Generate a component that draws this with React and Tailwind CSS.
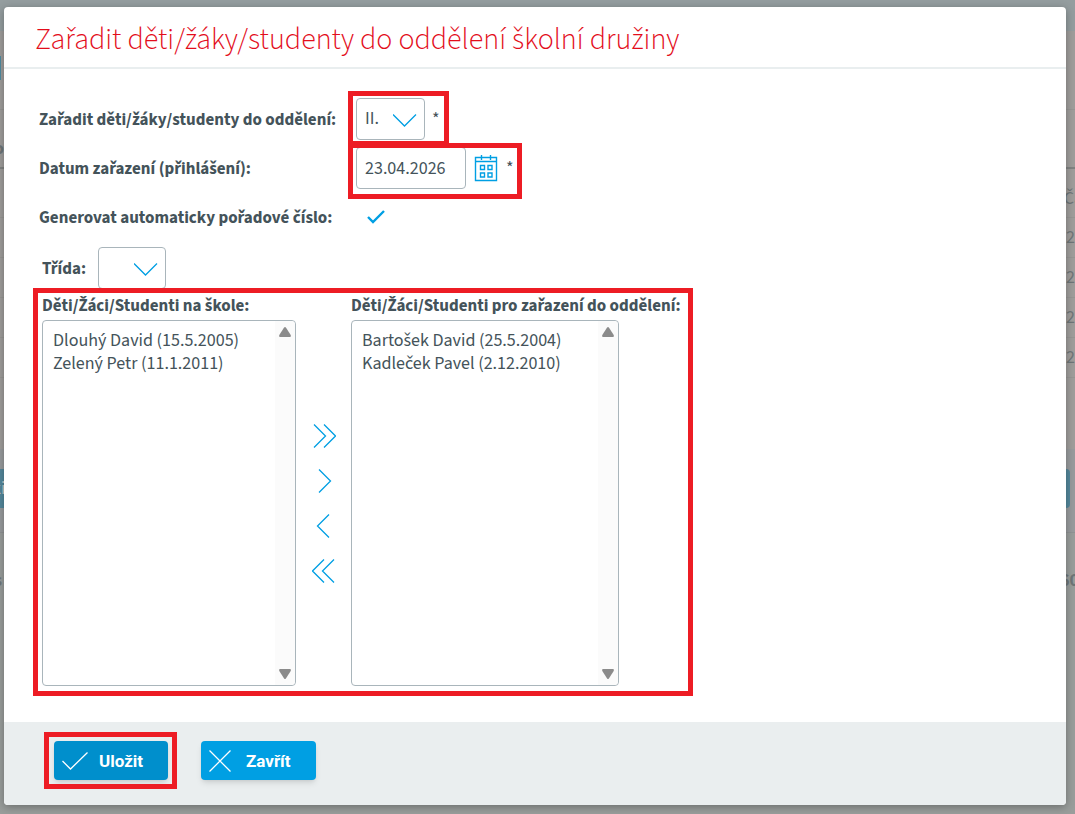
import React from 'react';

const freeChildren = ['Dlouhý David (15.5.2005)', 'Zelený Petr (11.1.2011)'];
const assignedChildren = ['Bartošek David (25.5.2004)', 'Kadleček Pavel (2.12.2010)'];

const moves = [
  { id: 'all-right', label: 'Přidat vše', path: 'M2 .5 13.5 12 2 23.5M12 .5 23.5 12 12 23.5' },
  { id: 'right', label: 'Přidat', path: 'M7 .5 18.5 12 7 23.5' },
  { id: 'left', label: 'Odebrat', path: 'M17 .5 5.5 12 17 23.5' },
  { id: 'all-left', label: 'Odebrat vše', path: 'M12 .5.5 12 12 23.5M22 .5 10.5 12 22 23.5' },
];

// Red rectangle that marks a part of the form
const Highlight = ({ className }) => (
  <span className={`pointer-events-none absolute z-10 border-5 border-[#ed1c24] ${className}`}></span>
);

const SelectBox = ({ id, width, options }) => (
  <div className="relative">
    <select
      id={id}
      className={`block h-[42px] appearance-none rounded-sm border border-[#a9b5bb] bg-white pl-2 text-lg ${width}`}
    >
      {options.map(option => (
        <option key={option}>{option}</option>
      ))}
    </select>
    <svg
      className="pointer-events-none absolute top-4 right-2 h-[13px] w-6"
      viewBox="0 0 24 13"
      fill="none"
      stroke="#009fe3"
      strokeWidth="1.3"
    >
      <path d="M0 .5 11.500 12 23 .5" />
    </svg>
  </div>
);

const ListBox = ({ id, width, options }) => (
  <div className={`relative h-[366px] ${width}`}>
    <select
      id={id}
      multiple
      className="block size-full appearance-none overflow-hidden rounded-sm border border-[#a9b5bb] bg-white px-2 py-[7px] text-lg"
    >
      {options.map(option => (
        <option key={option} className="h-[23px] px-0.5 py-0 leading-[23px]">{option}</option>
      ))}
    </select>
    <div className="pointer-events-none absolute inset-y-px right-px flex w-5 flex-col items-center justify-between rounded-r-sm bg-[#fbfbfb] py-1.5">
      <svg className="h-2.5 w-3" viewBox="0 0 12 10" fill="#8b8b8b">
        <path d="M5.1.6Q6-.4 6.9.6L11.7 8Q12.3 9.8 11 10H1Q-.3 9.8.3 8Z" />
      </svg>
      <svg className="h-2.5 w-3" viewBox="0 0 12 10" fill="#8b8b8b">
        <path d="M5.1 9.4Q6 10.4 6.9 9.4L11.7 2Q12.3.2 11 0H1Q-.3.2.3 2Z" />
      </svg>
    </div>
  </div>
);

// Dimmed page under the dialog, only its edges stay visible
const PageBehind = () => (
  <div aria-hidden="true" className="col-start-1 row-start-1 flex flex-col overflow-hidden bg-[#999d9b] text-lg text-[#6f7678]">
    <div className="h-[31px] bg-[#949d9f]"></div>
    <div className="flex h-[79px] items-center border-b border-[#979694] bg-[#9f9d9b]">
      <div className="mb-1 h-6 w-px bg-[#4f8ba0]"></div>
    </div>
    <div className="flex h-[59px] items-end border-b-2 border-[#818382] bg-[#9f9d9b] pb-1">
      <span className="-ml-1.5 font-bold">o</span>
    </div>
    <div className="flex h-[49px] items-end justify-end border-b border-[#979694] bg-[#9f9d9b] pb-1">
      <span className="-mr-2">Ča</span>
    </div>
    {[1, 2, 3, 4].map(row => (
      <div key={row} className="flex h-10 items-center justify-end border-b border-[#979694] bg-[#9f9d9b]">
        2
      </div>
    ))}
    <div className="h-[71px] bg-[#9f9d9b]"></div>
    <div className="h-[84px] border-b border-[#8f9394] bg-[#989b9d] pt-5 pr-[5px]">
      <div className="h-[39px] rounded-r-sm bg-[#54889c] pt-1.5 text-[#c4ccce]">
        <span className="-ml-2">ki</span>
      </div>
    </div>
    <div className="flex justify-between pt-[34px] font-bold">
      <span className="-ml-1.5">s</span>
      <span className="-mr-1">60</span>
    </div>
  </div>
);

const App = () => {
  return (
    <div className="grid min-h-screen grid-cols-1 font-['Source_Sans_Pro','Source_Sans_3','Noto_Sans',sans-serif] text-[17px] leading-6 text-[#44535a]">
      <PageBehind />

      <div
        role="dialog"
        aria-labelledby="dialog-title"
        className="z-10 col-start-1 row-start-1 mt-[7px] mr-[9px] mb-[9px] ml-1 flex flex-col overflow-hidden rounded-sm bg-white shadow-[0_2px_8px_rgba(0,0,0,0.3)]"
      >
        <header className="flex h-[62px] items-center border-b-2 border-[#e9eeef] pt-1.5 pl-[31px]">
          <h1 id="dialog-title" className="text-[30px] leading-8 font-light text-[#e30d1b]">
            Zařadit děti/žáky/studenty do oddělení školní družiny
          </h1>
        </header>

        <main className="flex-1 px-[35px] pt-[29px] pb-9">
          <div className="grid grid-cols-[317px_1fr] items-center gap-y-[7px]">
            <label htmlFor="department" className="pt-0.5 font-bold">Zařadit děti/žáky/studenty do oddělení:</label>
            <div className="relative flex w-fit gap-[7px]">
              <SelectBox id="department" width="w-[69px]" options={['II.']} />
              <span className="pt-2 text-lg">*</span>
              <Highlight className="-top-[7px] -bottom-1.5 -left-2 w-[101px]" />
            </div>

            <label htmlFor="date" className="pt-0.5 font-bold">Datum zařazení (přihlášení):</label>
            <div className="relative flex w-fit gap-2">
              <input
                id="date"
                type="text"
                defaultValue="23.04.2026"
                className="h-[42px] w-[110px] rounded-sm border border-[#a9b5bb] bg-white px-2 text-lg"
              />
              <button type="button" aria-label="Kalendář" className="self-center">
                <svg className="h-7 w-6" viewBox="0 0 24 28" fill="none" stroke="#009fe3">
                  <path d="M1.5 3.5H22.5V26.5H1.5ZM1.5 7.5H22.5M7.5 1V6M16.5 1V6" strokeWidth="1.4" />
                  <path d="M6.5 11.5h4v4h-4zM14 11.5h4v4h-4zM6.5 19h4v4h-4zM14 19h4v4h-4z" strokeWidth="1.4" />
                </svg>
              </button>
              <span className="pt-2 text-lg">*</span>
              <Highlight className="-top-1 -bottom-2.5 -left-2 w-[174px]" />
            </div>

            <label htmlFor="generate" className="pt-0.5 font-bold">Generovat automaticky pořadové číslo:</label>
            <div className="relative flex h-[42px] w-10 items-center justify-center">
              <input id="generate" type="checkbox" defaultChecked className="size-5 appearance-none" />
              <svg
                className="pointer-events-none absolute h-[14px] w-[18px]"
                viewBox="0 0 18 14"
                fill="none"
                stroke="#009fe3"
                strokeWidth="2.4"
              >
                <path d="M1 7 6 12 17 1" />
              </svg>
            </div>
          </div>

          <div className="mt-[9px] flex items-center gap-3 pl-[3px]">
            <label htmlFor="class" className="w-11 pt-0.5 font-bold">Třída:</label>
            <SelectBox id="class" width="w-[68px]" options={['']} />
          </div>

          <div className="relative flex w-fit pl-[3px]">
            <div>
              <label htmlFor="free" className="block h-[31px] leading-[34px] font-bold">Děti/Žáci/Studenti na škole:</label>
              <ListBox id="free" width="w-[254px]" options={freeChildren} />
            </div>
            <div className="flex w-[55px] flex-col items-center justify-center pt-[31px]">
              {moves.map(move => (
                <button key={move.id} type="button" aria-label={move.label} className="flex h-[45px] items-center">
                  <svg className="size-6" viewBox="0 0 24 24" fill="none" stroke="#009fe3" strokeWidth="1.3">
                    <path d={move.path} />
                  </svg>
                </button>
              ))}
            </div>
            <div>
              <label htmlFor="assigned" className="block h-[31px] leading-[34px] font-bold whitespace-nowrap">Děti/Žáci/Studenti pro zařazení do oddělení:</label>
              <ListBox id="assigned" width="w-[268px]" options={assignedChildren} />
            </div>
            <Highlight className="-top-px -bottom-2.5 -left-1.5 w-[660px]" />
          </div>
        </main>

        <footer className="flex h-[83px] items-start gap-[33px] bg-[#eaeeef] pt-[19px] pl-[50px] font-[Roboto,sans-serif] font-bold text-white">
          <div className="relative">
            <button type="button" className="flex h-[39px] w-[114px] items-center gap-[11px] rounded-sm bg-[#008fcc] pl-2 shadow-md">
              <svg className="h-[18px] w-[26px]" viewBox="0 0 26 18" fill="none" stroke="white" strokeWidth="1.3">
                <path d="M.5 9 8.5 17 25.5.5" />
              </svg>
              Uložit
            </button>
            <Highlight className="-inset-y-[9px] -right-[9px] -left-2.5" />
          </div>
          <button type="button" className="flex h-[39px] w-[115px] items-center gap-[15px] rounded-sm bg-[#009fe3] pl-2 shadow-md">
            <svg className="h-[22px] w-[22px]" viewBox="0 0 22 22" fill="none" stroke="white" strokeWidth="1.3">
              <path d="M.5.5 21.5 21.5M21.5.5.5 21.5" />
            </svg>
            Zavřít
          </button>
        </footer>
      </div>
    </div>
  );
};

export default App;
